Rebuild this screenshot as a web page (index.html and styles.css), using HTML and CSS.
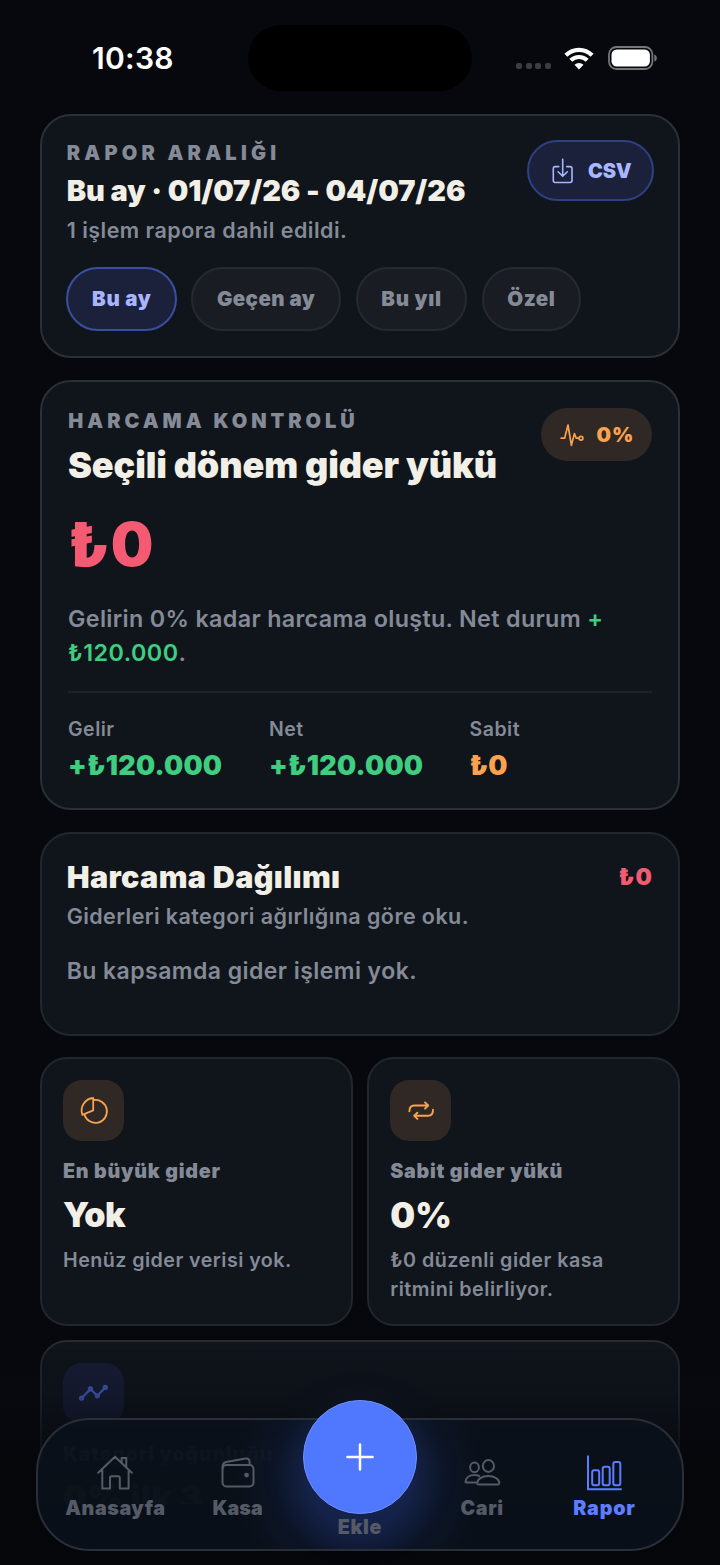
FILE: index.html
```html
<!DOCTYPE html>
<html lang="tr">
<head>
<meta charset="utf-8">
<title>Rapor</title>
<link rel="stylesheet" href="styles.css">
</head>
<body>
<div class="screen">
  <header class="status">
    <span class="time">10:38</span>
    <span class="island"></span>
    <div class="indicators">
      <span class="dots"><i></i><i></i><i></i><i></i></span>
      <svg class="wifi" width="30" height="23" viewBox="0 0 30 23" fill="none" stroke="#fff">
        <path d="M1.9 8.2A18.6 18.6 0 0 1 28.1 8.2" stroke-width="4.2"/>
        <path d="M6.8 13.3A11.8 11.8 0 0 1 23.2 13.3" stroke-width="4.2"/>
        <path d="M15 22.5L10.5 17.8A6.6 6.6 0 0 1 19.5 17.8Z" fill="#fff" stroke="none"/>
      </svg>
      <svg class="battery" width="49" height="24" viewBox="0 0 49 24">
        <rect x="1" y="1" width="43.4" height="22" rx="7.5" fill="none" stroke="#75767a" stroke-width="1.8"/>
        <rect x="3.5" y="3.5" width="38.4" height="17" rx="5.2" fill="#fff"/>
        <path d="M46.3 8.4C48 9 48.8 10.4 48.8 12S48 15 46.3 15.6Z" fill="#75767a"/>
      </svg>
    </div>
  </header>

  <main class="feed">
    <section class="card range">
      <div class="card-head">
        <div>
          <p class="eyebrow eyebrow-range">RAPOR ARALIĞI</p>
          <h1 class="range-title">Bu ay · 01/07/26 - 04/07/26</h1>
          <p class="sub">1 işlem rapora dahil edildi.</p>
        </div>
        <div class="export">
          <svg width="26" height="26" viewBox="0 0 26 26" fill="none" stroke="#a9b6ff" stroke-width="1.6" stroke-linecap="round" stroke-linejoin="round">
            <path d="M8.8 8.6H5.3Q3.3 8.6 3.3 10.6V22.5Q3.3 24.5 5.3 24.5H20Q22 24.5 22 22.5V10.6Q22 8.6 20 8.6H16.7M12.7 1.2V18M8.1 13.8L12.7 18.3L17.3 13.8"/>
          </svg>
          <span>CSV</span>
        </div>
      </div>
      <div class="chips">
        <span class="chip chip-month active">Bu ay</span>
        <span class="chip chip-last">Geçen ay</span>
        <span class="chip chip-year">Bu yıl</span>
        <span class="chip chip-custom">Özel</span>
      </div>
    </section>

    <section class="card control">
      <div class="card-head">
        <div>
          <p class="eyebrow">HARCAMA KONTROLÜ</p>
          <h2 class="control-title">Seçili dönem gider yükü</h2>
        </div>
        <div class="rate">
          <svg width="24" height="24" viewBox="0 0 24 24" fill="none" stroke="#f9a24f" stroke-width="1.7" stroke-linecap="round" stroke-linejoin="round">
            <path d="M1.2 15.2H4.6L8 2L11.4 22.3L14.4 10.6L16.3 15.2H18.7"/><circle cx="21" cy="15.2" r="1.9"/>
          </svg>
          <span>0%</span>
        </div>
      </div>
      <p class="amount">₺0</p>
      <p class="summary">Gelirin 0% kadar harcama oluştu. Net durum <b>+</b><br><b class="net">₺120.000</b>.</p>
      <div class="metrics">
        <div><p class="metric-label">Gelir</p><p class="metric-value green">+₺120.000</p></div>
        <div><p class="metric-label">Net</p><p class="metric-value green">+₺120.000</p></div>
        <div><p class="metric-label">Sabit</p><p class="metric-value orange">₺0</p></div>
      </div>
    </section>

    <section class="card spread">
      <div class="card-head">
        <h2 class="spread-title">Harcama Dağılımı</h2>
        <span class="spread-total">₺0</span>
      </div>
      <p class="sub spread-sub">Giderleri kategori ağırlığına göre oku.</p>
      <p class="empty">Bu kapsamda gider işlemi yok.</p>
    </section>

    <div class="tiles">
      <section class="card tile">
        <div class="tile-icon">
          <svg width="30" height="30" viewBox="0 0 30 30" fill="none" stroke="#f9a24f" stroke-width="1.8" stroke-linejoin="round">
            <path d="M14.2 3V15.3L3.4 19.9A12.6 12.6 0 0 1 14.2 3Z"/>
            <path d="M14.6 5A11.5 11.5 0 1 1 5.4 19.6"/>
          </svg>
        </div>
        <p class="tile-label">En büyük gider</p>
        <p class="tile-value">Yok</p>
        <p class="tile-note">Henüz gider verisi yok.</p>
      </section>
      <section class="card tile">
        <div class="tile-icon">
          <svg width="30" height="30" viewBox="0 0 30 30" fill="none" stroke="#f9a24f" stroke-width="1.9" stroke-linecap="round" stroke-linejoin="round">
            <path d="M3.4 16.2C3.4 12.7 4.8 10.5 8.2 10.5H22M19 7.4L22.2 10.5L19 13.6"/>
            <path d="M27 14.8C27 18.3 25.6 20.8 22.2 20.8H8.3M11.4 17.7L8.2 20.8L11.4 23.9"/>
          </svg>
        </div>
        <p class="tile-label">Sabit gider yükü</p>
        <p class="tile-value zero">0%</p>
        <p class="tile-note wide">₺0 düzenli gider kasa<br>ritmini belirliyor.</p>
      </section>
      <section class="card tile density">
        <div class="tile-icon blue">
          <svg width="30" height="30" viewBox="0 0 30 30" fill="none" stroke="#4a66d8" stroke-width="2.2" stroke-linejoin="round">
            <path d="M3.7 19.1L10.3 12.2M12.5 12L17.3 16.8M19.5 16.6L25.2 10.500"/>
            <circle cx="2.6" cy="20.2" r="1.5"/><circle cx="11.4" cy="10.9" r="1.5"/><circle cx="18.4" cy="17.8" r="1.5"/><circle cx="26.3" cy="9.4" r="1.5"/>
          </svg>
        </div>
        <p class="tile-label">Kategori yoğunluğu</p>
        <p class="tile-value third">0% ilk 3</p>
      </section>
    </div>
  </main>

  <div class="fade"></div>

  <nav class="tabbar">
    <div class="tab">
      <svg width="36" height="36" viewBox="0 0 36 36" fill="none" stroke="#555b66" stroke-width="2" stroke-linecap="round" stroke-linejoin="round">
        <path d="M1.2 17.8L18 1.7L34.8 17.8M5.3 14V33.4H13V22.9Q13 21.3 14.6 21.3H21.2Q22.8 21.3 22.8 22.9V33.4H31.6V14.8M24.7 7.8V3H29.3V12.3"/>
      </svg>
      <span class="home">Anasayfa</span>
    </div>
    <div class="tab">
      <svg width="36" height="36" viewBox="0 0 36 36" fill="none" stroke="#555b66" stroke-width="2" stroke-linecap="round" stroke-linejoin="round">
        <rect x="2.5" y="10" width="31" height="21.5" rx="4"/>
        <path d="M2.6 13.5V11.5Q2.6 7.8 6.2 7L25.5 3.5C28.2 3.1 29.6 4.5 29.6 7V10"/>
        <circle cx="26.6" cy="20.1" r="2.4" fill="#555b66" stroke="none"/>
      </svg>
      <span class="wallet">Kasa</span>
    </div>
    <div class="tab center">
      <span class="add"><svg width="30" height="30" viewBox="0 0 30 30" fill="none" stroke="#fff" stroke-width="2.5" stroke-linecap="round"><path d="M15 2.4V27.6M2.4 15H27.6"/></svg></span>
      <span class="plus-label">Ekle</span>
    </div>
    <div class="tab">
      <svg width="36" height="36" viewBox="0 0 36 36" fill="none" stroke="#555b66" stroke-width="2" stroke-linecap="round" stroke-linejoin="round">
        <ellipse cx="10.5" cy="12.3" rx="4.4" ry="4.9"/>
        <ellipse cx="24.4" cy="11" rx="5.6" ry="5.9"/>
        <path d="M13.2 28.5C13 24 18 21 24.3 21S35.6 24.5 35.3 28.2Q35.1 29.5 34 29.5H14.3Q13.2 29.5 13.2 28.5Z"/>
        <path d="M11.8 27.6H2.7Q1.4 27.6 1.5 26.3C2 22.3 6 20 10.5 20C12.5 20 14 20.3 15.3 21.1"/>
      </svg>
      <span class="people">Cari</span>
    </div>
    <div class="tab active">
      <svg width="36" height="36" viewBox="0 0 36 36" fill="none" stroke="#5d7dff" stroke-width="2" stroke-linecap="round" stroke-linejoin="round">
        <path d="M2 1.2V34.2H35"/>
        <rect x="6.2" y="15.2" width="7" height="15" rx="2"/>
        <rect x="16.7" y="11.8" width="7" height="18.4" rx="2"/>
        <rect x="27.3" y="7" width="7" height="23.2" rx="2"/>
      </svg>
      <span class="report">Rapor</span>
    </div>
  </nav>
</div>
</body>
</html>
```
FILE: styles.css
```css
* { box-sizing: border-box; }
body { margin: 0; background: #07080d; }
p, h1, h2 { margin: 0; }
svg { display: block; flex: none; overflow: visible; }

.screen {
  position: relative;
  width: 720px;
  height: 1565px;
  overflow: hidden;
  background: #07080d;
  color: #f2efe6;
  font-family: Inter, "Noto Sans", sans-serif;
  font-weight: 600;
  white-space: nowrap;
}

/* Status bar */
.status {
  display: grid;
  grid-template-columns: 248px 224px 1fr;
  height: 114px;
  padding-top: 25px;
}
.time {
  padding-left: 92px;
  font-size: 30px;
  line-height: 67px;
  letter-spacing: 0.3px;
  color: #fff;
}
.island { height: 66px; border-radius: 33px; background: #000; }
.indicators { display: flex; height: 66px; padding-left: 44px; align-items: center; }
.dots { display: flex; gap: 3.5px; padding-top: 16px; }
.dots i { width: 6px; height: 6px; border-radius: 2px; background: #3c3d41; }
.wifi { margin-left: 13.5px; }
.battery { margin-left: 13.5px; }

/* Cards */
.feed { height: 1390px; padding: 0 40px; overflow: hidden; }
.card {
  background: #10151c;
  border: 2px solid #22272d;
  border-radius: 31px;
}
.card-head { display: flex; justify-content: space-between; align-items: flex-start; }
.eyebrow {
  padding-top: 1px;
  font-size: 20px;
  font-weight: 900;
  line-height: 25px;
  letter-spacing: 3.97px;
  color: #858a97;
}
.eyebrow-range { letter-spacing: 4.25px; }
.sub { font-size: 21.5px; line-height: 28px; letter-spacing: 0.43px; color: #858a97; }

.range { height: 244px; padding: 24px 24px 0; border-color: #293036; }
.range .eyebrow, .range-title, .range .sub { padding-left: 0.7px; }
.range-title {
  margin-top: 7px;
  font-size: 29px;
  font-weight: 900;
  line-height: 36px;
  letter-spacing: -0.07px;
}
.range .sub { margin-top: 7px; letter-spacing: 0.48px; }
.export {
  display: flex;
  align-items: center;
  gap: 12px;
  width: 127px;
  height: 61px;
  padding-left: 21px;
  border: 2px solid #2f4186;
  border-radius: 31px;
  background: #1b213a;
  color: #a9b6ff;
  font-size: 20px;
  font-weight: 900;
  letter-spacing: -0.2px;
}
.chips { display: flex; gap: 15px; margin-top: 23px; }
.chip {
  height: 64px;
  border: 2px solid #252a31;
  border-radius: 32px;
  background: #191c23;
  color: #858a97;
  font-size: 20.5px;
  font-weight: 900;
  line-height: 60px;
  letter-spacing: 0.7px;
  text-align: center;
}
.chip.active { border-color: #3a4f9f; background: #1b213a; color: #a9b6ff; }
.chip-month { width: 110.5px; padding-left: 1px; }
.chip-last { width: 150px; margin-left: -0.5px; letter-spacing: 0.4px; }
.chip-year { width: 111px; }
.chip-custom { width: 98.5px; letter-spacing: 0.5px; }

.control { height: 430px; margin-top: 22px; padding: 26px 26px 0; border-color: #2b2f36; }
.control .eyebrow { padding-left: 0.3px; }
.control-title {
  margin-top: 8.5px;
  font-size: 36px;
  font-weight: 900;
  line-height: 44px;
  letter-spacing: -0.13px;
}
.rate {
  display: flex;
  align-items: center;
  gap: 12.5px;
  width: 111px;
  height: 53px;
  padding-left: 19px;
  border-radius: 27px;
  background: #302824;
  color: #f9a24f;
  font-size: 20.5px;
  font-weight: 900;
  letter-spacing: 0.9px;
}
.amount {
  margin-top: 23.5px;
  color: #f45b72;
  font-size: 60px;
  font-weight: 900;
  line-height: 68px;
  letter-spacing: 1.5px;
}
.summary {
  margin-top: 23.5px;
  color: #858a97;
  font-size: 23.3px;
  line-height: 34px;
  letter-spacing: 0.34px;
}
.summary b { color: #3fce80; font-weight: 600; }
.summary .net { letter-spacing: 0.5px; }
.metrics {
  display: grid;
  grid-template-columns: 201px 200.5px 1fr;
  margin-top: 21px;
  padding-top: 24px;
  border-top: 2px solid #1e2329;
}
.metric-label { color: #858a97; font-size: 19.5px; line-height: 25px; letter-spacing: 0.5px; }
.metric-value { margin-top: 7px; font-size: 27px; font-weight: 900; line-height: 34px; letter-spacing: 0.25px; }
.orange { color: #f9a24f; letter-spacing: 0.3px; }
.green { color: #3fce80; }

.spread { height: 204px; margin-top: 21.5px; padding: 25.5px 26px 0 24.7px; }
.spread-title { font-size: 30.5px; font-weight: 900; line-height: 36px; letter-spacing: 0.35px; }
.spread-total {
  color: #f45b72;
  font-size: 23px;
  font-weight: 900;
  line-height: 37px;
  letter-spacing: 1.2px;
  margin-right: -1.2px;
}
.spread-sub { margin-top: 6px; }
.empty { margin-top: 26px; color: #858a97; font-size: 23px; line-height: 30px; letter-spacing: 0.45px; }

.tiles {
  display: grid;
  grid-template-columns: 312.8px 312.8px;
  grid-template-rows: 269px 269px;
  gap: 14.4px;
  margin-top: 21.5px;
}
.tile { padding: 20.5px 21px; border-radius: 27px; }
.density { grid-column: 1 / 3; border-color: #272b31; }
.tile-icon {
  display: flex;
  align-items: center;
  justify-content: center;
  width: 61px;
  height: 61px;
  border-radius: 19px;
  background: #302824;
}
.tile-icon.blue { background: #191f3a; }
.tile-label {
  margin-top: 18px;
  color: #858a97;
  font-size: 19.7px;
  font-weight: 900;
  line-height: 25px;
  letter-spacing: 0.75px;
}
.tile-value { margin-top: 11px; font-size: 34px; font-weight: 900; line-height: 40px; letter-spacing: -0.5px; }
.tile-value.zero { font-size: 35px; letter-spacing: 0.3px; }
.tile-value.third { letter-spacing: 0.4px; }
.tile-note { margin-top: 11.5px; color: #858a97; font-size: 19.7px; line-height: 29px; letter-spacing: 0.45px; }
.tile-note.wide { letter-spacing: 0.5px; }

/* Dimming behind the tab bar */
.fade {
  position: absolute;
  inset: 1350px 0 0;
  background: linear-gradient(rgba(5, 8, 16, 0.15), rgba(7, 10, 16, 0.32) 44px, rgba(6, 8, 13, 0.6) 80px, rgba(5, 6, 10, 0.88) 125px);
}

/* Tab bar */
.tabbar {
  position: absolute;
  left: 36px;
  top: 1418px;
  display: grid;
  grid-template-columns: repeat(5, 122.25px);
  width: 648px;
  height: 133px;
  padding: 0 16.3px;
  border: 2px solid #2a2e36;
  border-radius: 54px;
  background:
    radial-gradient(circle 125px at 322px 60px, rgba(50, 80, 185, 0.26) 40%, rgba(40, 70, 160, 0.1) 68%, rgba(30, 50, 120, 0) 100%),
    rgba(10, 17, 27, 0.86);
}
.tab {
  display: flex;
  flex-direction: column;
  align-items: center;
  padding-top: 35px;
  color: #555b66;
  font-size: 19.7px;
  font-weight: 900;
  line-height: 25px;
}
.tab > span { margin-top: 4.5px; letter-spacing: 0.6px; }
.tab .wallet { letter-spacing: 0.05px; }
.tab .report { letter-spacing: 0.8px; }
.tab.active { color: #5d7dff; }
.tab.center { padding-top: 0; }
.tab .add {
  display: flex;
  flex: none;
  align-items: center;
  justify-content: center;
  width: 114px;
  height: 114px;
  margin: -20px 0 0 0.5px;
  border: 1.5px solid #6f8fff;
  border-radius: 50%;
  background: #4f78ff;
  box-shadow: 0 12px 50px rgba(50, 85, 210, 0.12);
}
.tab .plus-label { margin-top: 0.5px; }
```
